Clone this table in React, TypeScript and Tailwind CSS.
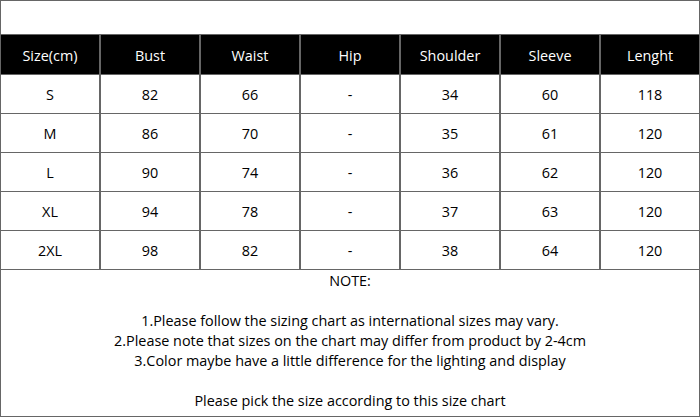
import React from "react";

const headers = ["Size(cm)", "Bust", "Waist", "Hip", "Shoulder", "Sleeve", "Lenght"];
const rows = [
  ["S", "82", "66", "-", "34", "60", "118"],
  ["M", "86", "70", "-", "35", "61", "120"],
  ["L", "90", "74", "-", "36", "62", "120"],
  ["XL", "94", "78", "-", "37", "63", "120"],
  ["2XL", "98", "82", "-", "38", "64", "120"],
];

export default function App() {
  return (
    <div
      className="w-[700px] h-[417px] bg-white border border-[#666] flex flex-col text-black"
      style={{ fontFamily: '"Open Sans", "Noto Sans", sans-serif' }}
    >
      <div className="h-[34px] shrink-0 border-b border-[#666]" />
      <div className="grid grid-cols-7 gap-x-[2px] gap-y-px bg-[#666] border-b border-[#666] grid-rows-[39px_38px_38px_38px_38px_38px] shrink-0">
        {headers.map((h) => (
          <div key={h} className="bg-black text-white flex items-center justify-center pt-[2px] text-[14.4px]">
            {h}
          </div>
        ))}
        {rows.map((r, i) =>
          r.map((c, j) => (
            <div key={`${i}-${j}`} className="bg-white flex items-center justify-center pt-[1px] text-[14.4px]">
              {c}
            </div>
          ))
        )}
      </div>
      <div className="flex-1 flex flex-col items-center pt-px text-[14.4px] leading-[20px]">
        <div>NOTE:</div>
        <div className="h-[20px]" />
        <div>1.Please follow the sizing chart as international sizes may vary.</div>
        <div>2.Please note that sizes on the chart may differ from product by 2-4cm</div>
        <div>3.Color maybe have a little difference for the lighting and display</div>
        <div className="h-[20px]" />
        <div>Please pick the size according to this size chart</div>
      </div>
    </div>
  );
}
